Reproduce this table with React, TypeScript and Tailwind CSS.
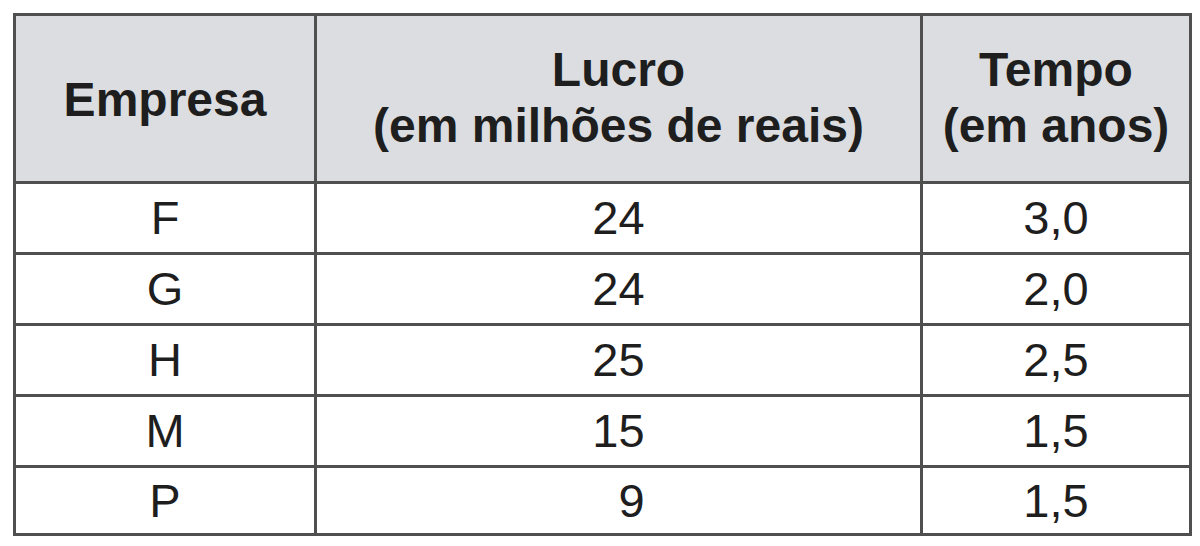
import React from 'react';

type Row = { empresa: string; lucro: string; tempo: string };

const rows: Row[] = [
  { empresa: 'F', lucro: '24', tempo: '3,0' },
  { empresa: 'G', lucro: '24', tempo: '2,0' },
  { empresa: 'H', lucro: '25', tempo: '2,5' },
  { empresa: 'M', lucro: '15', tempo: '1,5' },
  { empresa: 'P', lucro: '9', tempo: '1,5' },
];

export default function App() {
  return (
    <div className="w-[1200px] h-[546px] bg-white pl-[13px] pt-[13px] text-[#1e1e1e]" style={{ fontFamily: '"Liberation Sans", Arial, sans-serif' }}>
      <div className="w-[1179px] border-[3px] border-[#4f4f4f]">
        {/* header */}
        <div className="grid grid-cols-[301px_606px_266px] h-[168px] bg-[#dcdde0] border-b-[3px] border-[#4f4f4f] font-bold text-[48px] leading-[56px]">
          <div className="flex items-center justify-center border-r-[3px] border-[#4f4f4f] pt-[2px]">Empresa</div>
          <div className="flex flex-col items-center justify-center border-r-[3px] border-[#4f4f4f] pb-[2px]">
            <span>Lucro</span>
            <span>(em milhões de reais)</span>
          </div>
          <div className="flex flex-col items-center justify-center pb-[2px]">
            <span>Tempo</span>
            <span>(em anos)</span>
          </div>
        </div>
        {rows.map((r, i) => (
          <div
            key={r.empresa}
            className={
              i < rows.length - 1
                ? 'grid grid-cols-[301px_606px_266px] h-[71px] border-b-[3px] border-[#4f4f4f] text-[47px] leading-[54px]'
                : 'grid grid-cols-[301px_606px_266px] h-[65px] text-[47px] leading-[54px]'
            }
          >
            <div className="flex items-center justify-center border-r-[3px] border-[#4f4f4f]">{r.empresa}</div>
            <div className="flex items-center justify-center border-r-[3px] border-[#4f4f4f]">
              <span className={r.lucro.length === 1 ? 'pl-[26px]' : ''}>{r.lucro}</span>
            </div>
            <div className="flex items-center justify-center">{r.tempo}</div>
          </div>
        ))}
      </div>
    </div>
  );
}
